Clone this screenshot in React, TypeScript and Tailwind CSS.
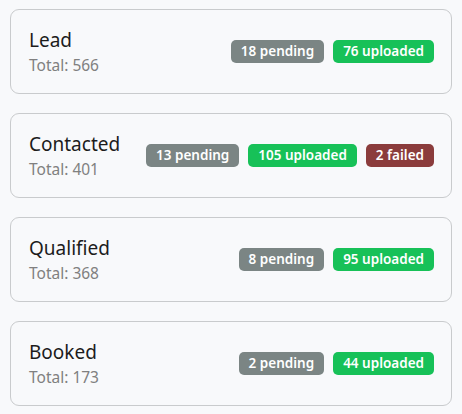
import React from 'react';

type Stage = {
  name: string;
  total: number;
  pending: number;
  uploaded: number;
  failed?: number;
};

const stages: Stage[] = [
  { name: 'Lead', total: 566, pending: 18, uploaded: 76 },
  { name: 'Contacted', total: 401, pending: 13, uploaded: 105, failed: 2 },
  { name: 'Qualified', total: 368, pending: 8, uploaded: 95 },
  { name: 'Booked', total: 173, pending: 2, uploaded: 44 },
];

const Badge: React.FC<{ className: string; children: React.ReactNode }> = ({ className, children }) => (
  <span className={`h-[23px] px-[10px] rounded-[5px] flex items-center text-[13.5px] font-semibold text-white ${className}`}>
    {children}
  </span>
);

export default function App() {
  return (
    <div
      className="min-h-screen bg-[#f8f9fb] px-[10px] pt-[9px] flex flex-col gap-[19px]"
      style={{ fontFamily: '"Noto Sans", "Open Sans", sans-serif' }}
    >
      {stages.map((s) => (
        <div
          key={s.name}
          className="h-[85px] rounded-[9px] border border-[#c9cbcd] bg-[#f8f9fb] pl-[18px] pr-[17px] flex items-center justify-between"
        >
          <div className="flex flex-col">
            <span className="text-[19px] leading-[24px] text-[#1c1c1c]">{s.name}</span>
            <span className="mt-[2px] text-[15.5px] leading-[22px] text-[#808080]">Total: {s.total}</span>
          </div>
          <div className="flex items-center gap-[9px]">
            <Badge className="bg-[#7b8584]">{s.pending} pending</Badge>
            <Badge className="bg-[#17c158]">{s.uploaded} uploaded</Badge>
            {s.failed ? <Badge className="bg-[#8b3c3c]">{s.failed} failed</Badge> : null}
          </div>
        </div>
      ))}
    </div>
  );
}
